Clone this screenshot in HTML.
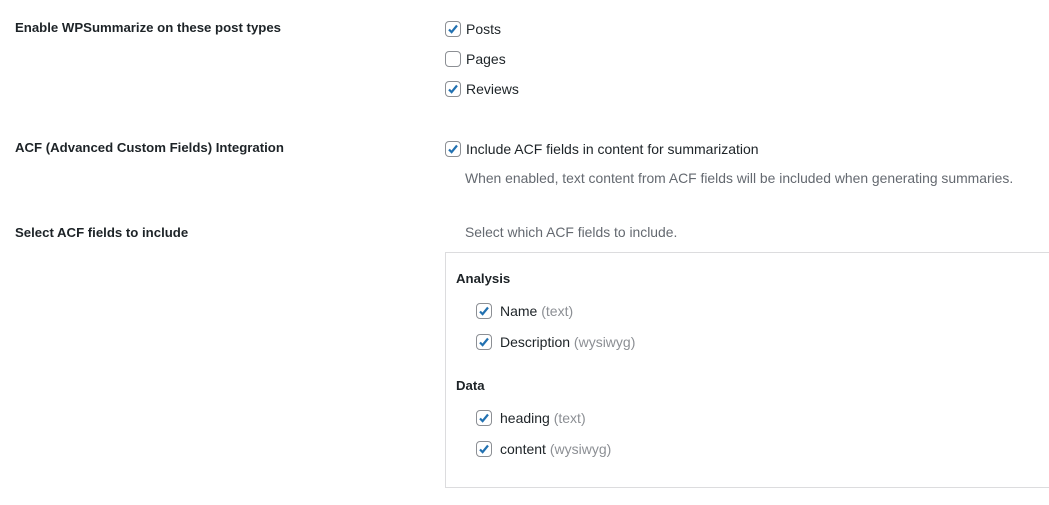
<!DOCTYPE html><html><head><style>
body{margin:0;background:#fff;width:1049px;height:505px;position:relative;font-family:"Liberation Sans",sans-serif;font-size:14px;color:#1d2327;overflow:hidden}
.a{position:absolute;white-space:nowrap;line-height:18px}
.h{font-weight:bold;font-size:13.2px}
.cb{position:absolute;width:14px;height:14px;border:1px solid #8c8f94;border-radius:4px;background:#fff}
.cb svg{position:absolute;left:1px;top:1px}
.d{color:#646970;font-size:13.9px}
.g{color:#8c8f94}
.box{position:absolute;left:445px;top:252px;width:610px;height:234px;border:1px solid #dcdcde}
</style></head><body>
<div class="a h" style="left:15px;top:19px">Enable WPSummarize on these post types</div>
<div class="a h" style="left:15px;top:139px">ACF (Advanced Custom Fields) Integration</div>
<div class="a h" style="left:15px;top:224px">Select ACF fields to include</div>

<div class="cb" style="left:445px;top:21px"><svg width="12" height="12" viewBox="0 0 12 12"><path d="M2 6.5l2.6 2.6L10 2.5" stroke="#2271b1" stroke-width="2.2" fill="none"/></svg></div>
<div class="a" style="left:466px;top:20px">Posts</div>
<div class="cb" style="left:445px;top:51px"></div>
<div class="a" style="left:466px;top:50px">Pages</div>
<div class="cb" style="left:445px;top:81px"><svg width="12" height="12" viewBox="0 0 12 12"><path d="M2 6.5l2.6 2.6L10 2.5" stroke="#2271b1" stroke-width="2.2" fill="none"/></svg></div>
<div class="a" style="left:466px;top:80px">Reviews</div>
<div class="cb" style="left:445px;top:141px"><svg width="12" height="12" viewBox="0 0 12 12"><path d="M2 6.5l2.6 2.6L10 2.5" stroke="#2271b1" stroke-width="2.2" fill="none"/></svg></div>
<div class="a" style="left:466px;top:140px">Include ACF fields in content for summarization</div>
<div class="a d" style="left:465px;top:169px">When enabled, text content from ACF fields will be included when generating summaries.</div>
<div class="a d" style="left:465px;top:223px">Select which ACF fields to include.</div>
<div class="box"></div>
<div class="a h" style="left:456px;top:270px">Analysis</div>
<div class="cb" style="left:476px;top:303px"><svg width="12" height="12" viewBox="0 0 12 12"><path d="M2 6.5l2.6 2.6L10 2.5" stroke="#2271b1" stroke-width="2.2" fill="none"/></svg></div>
<div class="a" style="left:500px;top:302px">Name <span class="g">(text)</span></div>
<div class="cb" style="left:476px;top:334px"><svg width="12" height="12" viewBox="0 0 12 12"><path d="M2 6.5l2.6 2.6L10 2.5" stroke="#2271b1" stroke-width="2.2" fill="none"/></svg></div>
<div class="a" style="left:500px;top:333px">Description <span class="g">(wysiwyg)</span></div>
<div class="a h" style="left:456px;top:377px">Data</div>
<div class="cb" style="left:476px;top:410px"><svg width="12" height="12" viewBox="0 0 12 12"><path d="M2 6.5l2.6 2.6L10 2.5" stroke="#2271b1" stroke-width="2.2" fill="none"/></svg></div>
<div class="a" style="left:500px;top:409px">heading <span class="g">(text)</span></div>
<div class="cb" style="left:476px;top:441px"><svg width="12" height="12" viewBox="0 0 12 12"><path d="M2 6.5l2.6 2.6L10 2.5" stroke="#2271b1" stroke-width="2.2" fill="none"/></svg></div>
<div class="a" style="left:500px;top:440px">content <span class="g">(wysiwyg)</span></div>
</body></html>
